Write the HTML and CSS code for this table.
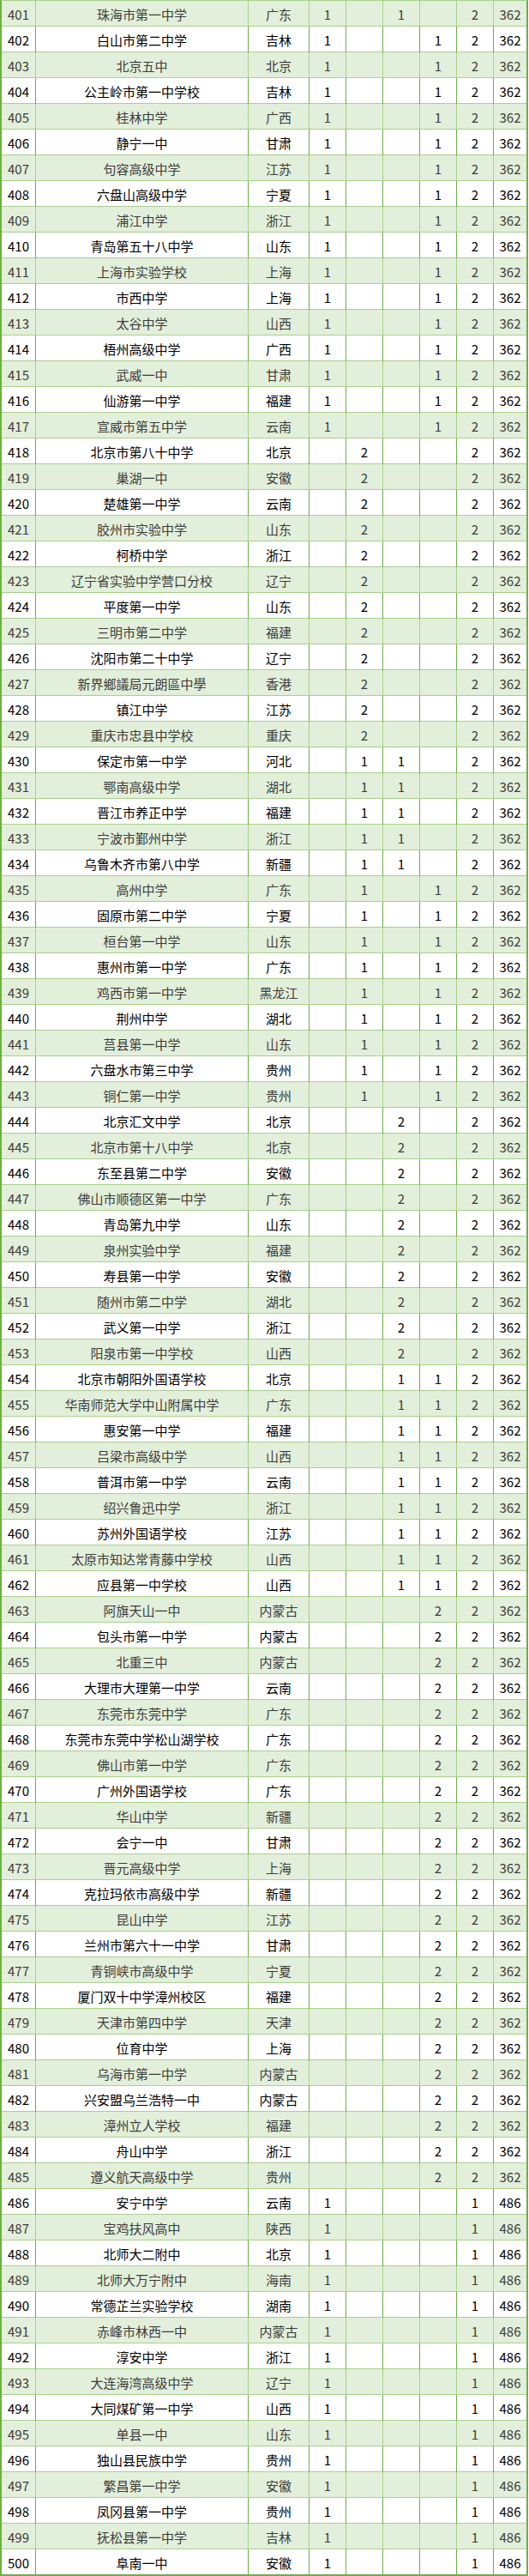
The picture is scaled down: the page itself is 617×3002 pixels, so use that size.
FILE: index.html
```html
<!DOCTYPE html>
<html lang="zh-CN">
<head>
<meta charset="utf-8">
<title>排名 401-500</title>
<link rel="stylesheet" href="styles.css">
</head>
<body>
<div class="sheet">
<div class="row alt"><span class="c">401</span><span class="c">珠海市第一中学</span><span class="c">广东</span><span class="c">1</span><span class="c"></span><span class="c">1</span><span class="c"></span><span class="c">2</span><span class="c">362</span></div>
<div class="row"><span class="c">402</span><span class="c">白山市第二中学</span><span class="c">吉林</span><span class="c">1</span><span class="c"></span><span class="c"></span><span class="c">1</span><span class="c">2</span><span class="c">362</span></div>
<div class="row alt"><span class="c">403</span><span class="c">北京五中</span><span class="c">北京</span><span class="c">1</span><span class="c"></span><span class="c"></span><span class="c">1</span><span class="c">2</span><span class="c">362</span></div>
<div class="row"><span class="c">404</span><span class="c">公主岭市第一中学校</span><span class="c">吉林</span><span class="c">1</span><span class="c"></span><span class="c"></span><span class="c">1</span><span class="c">2</span><span class="c">362</span></div>
<div class="row alt"><span class="c">405</span><span class="c">桂林中学</span><span class="c">广西</span><span class="c">1</span><span class="c"></span><span class="c"></span><span class="c">1</span><span class="c">2</span><span class="c">362</span></div>
<div class="row"><span class="c">406</span><span class="c">静宁一中</span><span class="c">甘肃</span><span class="c">1</span><span class="c"></span><span class="c"></span><span class="c">1</span><span class="c">2</span><span class="c">362</span></div>
<div class="row alt"><span class="c">407</span><span class="c">句容高级中学</span><span class="c">江苏</span><span class="c">1</span><span class="c"></span><span class="c"></span><span class="c">1</span><span class="c">2</span><span class="c">362</span></div>
<div class="row"><span class="c">408</span><span class="c">六盘山高级中学</span><span class="c">宁夏</span><span class="c">1</span><span class="c"></span><span class="c"></span><span class="c">1</span><span class="c">2</span><span class="c">362</span></div>
<div class="row alt"><span class="c">409</span><span class="c">浦江中学</span><span class="c">浙江</span><span class="c">1</span><span class="c"></span><span class="c"></span><span class="c">1</span><span class="c">2</span><span class="c">362</span></div>
<div class="row"><span class="c">410</span><span class="c">青岛第五十八中学</span><span class="c">山东</span><span class="c">1</span><span class="c"></span><span class="c"></span><span class="c">1</span><span class="c">2</span><span class="c">362</span></div>
<div class="row alt"><span class="c">411</span><span class="c">上海市实验学校</span><span class="c">上海</span><span class="c">1</span><span class="c"></span><span class="c"></span><span class="c">1</span><span class="c">2</span><span class="c">362</span></div>
<div class="row"><span class="c">412</span><span class="c">市西中学</span><span class="c">上海</span><span class="c">1</span><span class="c"></span><span class="c"></span><span class="c">1</span><span class="c">2</span><span class="c">362</span></div>
<div class="row alt"><span class="c">413</span><span class="c">太谷中学</span><span class="c">山西</span><span class="c">1</span><span class="c"></span><span class="c"></span><span class="c">1</span><span class="c">2</span><span class="c">362</span></div>
<div class="row"><span class="c">414</span><span class="c">梧州高级中学</span><span class="c">广西</span><span class="c">1</span><span class="c"></span><span class="c"></span><span class="c">1</span><span class="c">2</span><span class="c">362</span></div>
<div class="row alt"><span class="c">415</span><span class="c">武威一中</span><span class="c">甘肃</span><span class="c">1</span><span class="c"></span><span class="c"></span><span class="c">1</span><span class="c">2</span><span class="c">362</span></div>
<div class="row"><span class="c">416</span><span class="c">仙游第一中学</span><span class="c">福建</span><span class="c">1</span><span class="c"></span><span class="c"></span><span class="c">1</span><span class="c">2</span><span class="c">362</span></div>
<div class="row alt"><span class="c">417</span><span class="c">宣威市第五中学</span><span class="c">云南</span><span class="c">1</span><span class="c"></span><span class="c"></span><span class="c">1</span><span class="c">2</span><span class="c">362</span></div>
<div class="row"><span class="c">418</span><span class="c">北京市第八十中学</span><span class="c">北京</span><span class="c"></span><span class="c">2</span><span class="c"></span><span class="c"></span><span class="c">2</span><span class="c">362</span></div>
<div class="row alt"><span class="c">419</span><span class="c">巢湖一中</span><span class="c">安徽</span><span class="c"></span><span class="c">2</span><span class="c"></span><span class="c"></span><span class="c">2</span><span class="c">362</span></div>
<div class="row"><span class="c">420</span><span class="c">楚雄第一中学</span><span class="c">云南</span><span class="c"></span><span class="c">2</span><span class="c"></span><span class="c"></span><span class="c">2</span><span class="c">362</span></div>
<div class="row alt"><span class="c">421</span><span class="c">胶州市实验中学</span><span class="c">山东</span><span class="c"></span><span class="c">2</span><span class="c"></span><span class="c"></span><span class="c">2</span><span class="c">362</span></div>
<div class="row"><span class="c">422</span><span class="c">柯桥中学</span><span class="c">浙江</span><span class="c"></span><span class="c">2</span><span class="c"></span><span class="c"></span><span class="c">2</span><span class="c">362</span></div>
<div class="row alt"><span class="c">423</span><span class="c">辽宁省实验中学营口分校</span><span class="c">辽宁</span><span class="c"></span><span class="c">2</span><span class="c"></span><span class="c"></span><span class="c">2</span><span class="c">362</span></div>
<div class="row"><span class="c">424</span><span class="c">平度第一中学</span><span class="c">山东</span><span class="c"></span><span class="c">2</span><span class="c"></span><span class="c"></span><span class="c">2</span><span class="c">362</span></div>
<div class="row alt"><span class="c">425</span><span class="c">三明市第二中学</span><span class="c">福建</span><span class="c"></span><span class="c">2</span><span class="c"></span><span class="c"></span><span class="c">2</span><span class="c">362</span></div>
<div class="row"><span class="c">426</span><span class="c">沈阳市第二十中学</span><span class="c">辽宁</span><span class="c"></span><span class="c">2</span><span class="c"></span><span class="c"></span><span class="c">2</span><span class="c">362</span></div>
<div class="row alt"><span class="c">427</span><span class="c">新界鄉議局元朗區中學</span><span class="c">香港</span><span class="c"></span><span class="c">2</span><span class="c"></span><span class="c"></span><span class="c">2</span><span class="c">362</span></div>
<div class="row"><span class="c">428</span><span class="c">镇江中学</span><span class="c">江苏</span><span class="c"></span><span class="c">2</span><span class="c"></span><span class="c"></span><span class="c">2</span><span class="c">362</span></div>
<div class="row alt"><span class="c">429</span><span class="c">重庆市忠县中学校</span><span class="c">重庆</span><span class="c"></span><span class="c">2</span><span class="c"></span><span class="c"></span><span class="c">2</span><span class="c">362</span></div>
<div class="row"><span class="c">430</span><span class="c">保定市第一中学</span><span class="c">河北</span><span class="c"></span><span class="c">1</span><span class="c">1</span><span class="c"></span><span class="c">2</span><span class="c">362</span></div>
<div class="row alt"><span class="c">431</span><span class="c">鄂南高级中学</span><span class="c">湖北</span><span class="c"></span><span class="c">1</span><span class="c">1</span><span class="c"></span><span class="c">2</span><span class="c">362</span></div>
<div class="row"><span class="c">432</span><span class="c">晋江市养正中学</span><span class="c">福建</span><span class="c"></span><span class="c">1</span><span class="c">1</span><span class="c"></span><span class="c">2</span><span class="c">362</span></div>
<div class="row alt"><span class="c">433</span><span class="c">宁波市鄞州中学</span><span class="c">浙江</span><span class="c"></span><span class="c">1</span><span class="c">1</span><span class="c"></span><span class="c">2</span><span class="c">362</span></div>
<div class="row"><span class="c">434</span><span class="c">乌鲁木齐市第八中学</span><span class="c">新疆</span><span class="c"></span><span class="c">1</span><span class="c">1</span><span class="c"></span><span class="c">2</span><span class="c">362</span></div>
<div class="row alt"><span class="c">435</span><span class="c">高州中学</span><span class="c">广东</span><span class="c"></span><span class="c">1</span><span class="c"></span><span class="c">1</span><span class="c">2</span><span class="c">362</span></div>
<div class="row"><span class="c">436</span><span class="c">固原市第二中学</span><span class="c">宁夏</span><span class="c"></span><span class="c">1</span><span class="c"></span><span class="c">1</span><span class="c">2</span><span class="c">362</span></div>
<div class="row alt"><span class="c">437</span><span class="c">桓台第一中学</span><span class="c">山东</span><span class="c"></span><span class="c">1</span><span class="c"></span><span class="c">1</span><span class="c">2</span><span class="c">362</span></div>
<div class="row"><span class="c">438</span><span class="c">惠州市第一中学</span><span class="c">广东</span><span class="c"></span><span class="c">1</span><span class="c"></span><span class="c">1</span><span class="c">2</span><span class="c">362</span></div>
<div class="row alt"><span class="c">439</span><span class="c">鸡西市第一中学</span><span class="c">黑龙江</span><span class="c"></span><span class="c">1</span><span class="c"></span><span class="c">1</span><span class="c">2</span><span class="c">362</span></div>
<div class="row"><span class="c">440</span><span class="c">荆州中学</span><span class="c">湖北</span><span class="c"></span><span class="c">1</span><span class="c"></span><span class="c">1</span><span class="c">2</span><span class="c">362</span></div>
<div class="row alt"><span class="c">441</span><span class="c">莒县第一中学</span><span class="c">山东</span><span class="c"></span><span class="c">1</span><span class="c"></span><span class="c">1</span><span class="c">2</span><span class="c">362</span></div>
<div class="row"><span class="c">442</span><span class="c">六盘水市第三中学</span><span class="c">贵州</span><span class="c"></span><span class="c">1</span><span class="c"></span><span class="c">1</span><span class="c">2</span><span class="c">362</span></div>
<div class="row alt"><span class="c">443</span><span class="c">铜仁第一中学</span><span class="c">贵州</span><span class="c"></span><span class="c">1</span><span class="c"></span><span class="c">1</span><span class="c">2</span><span class="c">362</span></div>
<div class="row"><span class="c">444</span><span class="c">北京汇文中学</span><span class="c">北京</span><span class="c"></span><span class="c"></span><span class="c">2</span><span class="c"></span><span class="c">2</span><span class="c">362</span></div>
<div class="row alt"><span class="c">445</span><span class="c">北京市第十八中学</span><span class="c">北京</span><span class="c"></span><span class="c"></span><span class="c">2</span><span class="c"></span><span class="c">2</span><span class="c">362</span></div>
<div class="row"><span class="c">446</span><span class="c">东至县第二中学</span><span class="c">安徽</span><span class="c"></span><span class="c"></span><span class="c">2</span><span class="c"></span><span class="c">2</span><span class="c">362</span></div>
<div class="row alt"><span class="c">447</span><span class="c">佛山市顺德区第一中学</span><span class="c">广东</span><span class="c"></span><span class="c"></span><span class="c">2</span><span class="c"></span><span class="c">2</span><span class="c">362</span></div>
<div class="row"><span class="c">448</span><span class="c">青岛第九中学</span><span class="c">山东</span><span class="c"></span><span class="c"></span><span class="c">2</span><span class="c"></span><span class="c">2</span><span class="c">362</span></div>
<div class="row alt"><span class="c">449</span><span class="c">泉州实验中学</span><span class="c">福建</span><span class="c"></span><span class="c"></span><span class="c">2</span><span class="c"></span><span class="c">2</span><span class="c">362</span></div>
<div class="row"><span class="c">450</span><span class="c">寿县第一中学</span><span class="c">安徽</span><span class="c"></span><span class="c"></span><span class="c">2</span><span class="c"></span><span class="c">2</span><span class="c">362</span></div>
<div class="row alt"><span class="c">451</span><span class="c">随州市第二中学</span><span class="c">湖北</span><span class="c"></span><span class="c"></span><span class="c">2</span><span class="c"></span><span class="c">2</span><span class="c">362</span></div>
<div class="row"><span class="c">452</span><span class="c">武义第一中学</span><span class="c">浙江</span><span class="c"></span><span class="c"></span><span class="c">2</span><span class="c"></span><span class="c">2</span><span class="c">362</span></div>
<div class="row alt"><span class="c">453</span><span class="c">阳泉市第一中学校</span><span class="c">山西</span><span class="c"></span><span class="c"></span><span class="c">2</span><span class="c"></span><span class="c">2</span><span class="c">362</span></div>
<div class="row"><span class="c">454</span><span class="c">北京市朝阳外国语学校</span><span class="c">北京</span><span class="c"></span><span class="c"></span><span class="c">1</span><span class="c">1</span><span class="c">2</span><span class="c">362</span></div>
<div class="row alt"><span class="c">455</span><span class="c">华南师范大学中山附属中学</span><span class="c">广东</span><span class="c"></span><span class="c"></span><span class="c">1</span><span class="c">1</span><span class="c">2</span><span class="c">362</span></div>
<div class="row"><span class="c">456</span><span class="c">惠安第一中学</span><span class="c">福建</span><span class="c"></span><span class="c"></span><span class="c">1</span><span class="c">1</span><span class="c">2</span><span class="c">362</span></div>
<div class="row alt"><span class="c">457</span><span class="c">吕梁市高级中学</span><span class="c">山西</span><span class="c"></span><span class="c"></span><span class="c">1</span><span class="c">1</span><span class="c">2</span><span class="c">362</span></div>
<div class="row"><span class="c">458</span><span class="c">普洱市第一中学</span><span class="c">云南</span><span class="c"></span><span class="c"></span><span class="c">1</span><span class="c">1</span><span class="c">2</span><span class="c">362</span></div>
<div class="row alt"><span class="c">459</span><span class="c">绍兴鲁迅中学</span><span class="c">浙江</span><span class="c"></span><span class="c"></span><span class="c">1</span><span class="c">1</span><span class="c">2</span><span class="c">362</span></div>
<div class="row"><span class="c">460</span><span class="c">苏州外国语学校</span><span class="c">江苏</span><span class="c"></span><span class="c"></span><span class="c">1</span><span class="c">1</span><span class="c">2</span><span class="c">362</span></div>
<div class="row alt"><span class="c">461</span><span class="c">太原市知达常青藤中学校</span><span class="c">山西</span><span class="c"></span><span class="c"></span><span class="c">1</span><span class="c">1</span><span class="c">2</span><span class="c">362</span></div>
<div class="row"><span class="c">462</span><span class="c">应县第一中学校</span><span class="c">山西</span><span class="c"></span><span class="c"></span><span class="c">1</span><span class="c">1</span><span class="c">2</span><span class="c">362</span></div>
<div class="row alt"><span class="c">463</span><span class="c">阿旗天山一中</span><span class="c">内蒙古</span><span class="c"></span><span class="c"></span><span class="c"></span><span class="c">2</span><span class="c">2</span><span class="c">362</span></div>
<div class="row"><span class="c">464</span><span class="c">包头市第一中学</span><span class="c">内蒙古</span><span class="c"></span><span class="c"></span><span class="c"></span><span class="c">2</span><span class="c">2</span><span class="c">362</span></div>
<div class="row alt"><span class="c">465</span><span class="c">北重三中</span><span class="c">内蒙古</span><span class="c"></span><span class="c"></span><span class="c"></span><span class="c">2</span><span class="c">2</span><span class="c">362</span></div>
<div class="row"><span class="c">466</span><span class="c">大理市大理第一中学</span><span class="c">云南</span><span class="c"></span><span class="c"></span><span class="c"></span><span class="c">2</span><span class="c">2</span><span class="c">362</span></div>
<div class="row alt"><span class="c">467</span><span class="c">东莞市东莞中学</span><span class="c">广东</span><span class="c"></span><span class="c"></span><span class="c"></span><span class="c">2</span><span class="c">2</span><span class="c">362</span></div>
<div class="row"><span class="c">468</span><span class="c">东莞市东莞中学松山湖学校</span><span class="c">广东</span><span class="c"></span><span class="c"></span><span class="c"></span><span class="c">2</span><span class="c">2</span><span class="c">362</span></div>
<div class="row alt"><span class="c">469</span><span class="c">佛山市第一中学</span><span class="c">广东</span><span class="c"></span><span class="c"></span><span class="c"></span><span class="c">2</span><span class="c">2</span><span class="c">362</span></div>
<div class="row"><span class="c">470</span><span class="c">广州外国语学校</span><span class="c">广东</span><span class="c"></span><span class="c"></span><span class="c"></span><span class="c">2</span><span class="c">2</span><span class="c">362</span></div>
<div class="row alt"><span class="c">471</span><span class="c">华山中学</span><span class="c">新疆</span><span class="c"></span><span class="c"></span><span class="c"></span><span class="c">2</span><span class="c">2</span><span class="c">362</span></div>
<div class="row"><span class="c">472</span><span class="c">会宁一中</span><span class="c">甘肃</span><span class="c"></span><span class="c"></span><span class="c"></span><span class="c">2</span><span class="c">2</span><span class="c">362</span></div>
<div class="row alt"><span class="c">473</span><span class="c">晋元高级中学</span><span class="c">上海</span><span class="c"></span><span class="c"></span><span class="c"></span><span class="c">2</span><span class="c">2</span><span class="c">362</span></div>
<div class="row"><span class="c">474</span><span class="c">克拉玛依市高级中学</span><span class="c">新疆</span><span class="c"></span><span class="c"></span><span class="c"></span><span class="c">2</span><span class="c">2</span><span class="c">362</span></div>
<div class="row alt"><span class="c">475</span><span class="c">昆山中学</span><span class="c">江苏</span><span class="c"></span><span class="c"></span><span class="c"></span><span class="c">2</span><span class="c">2</span><span class="c">362</span></div>
<div class="row"><span class="c">476</span><span class="c">兰州市第六十一中学</span><span class="c">甘肃</span><span class="c"></span><span class="c"></span><span class="c"></span><span class="c">2</span><span class="c">2</span><span class="c">362</span></div>
<div class="row alt"><span class="c">477</span><span class="c">青铜峡市高级中学</span><span class="c">宁夏</span><span class="c"></span><span class="c"></span><span class="c"></span><span class="c">2</span><span class="c">2</span><span class="c">362</span></div>
<div class="row"><span class="c">478</span><span class="c">厦门双十中学漳州校区</span><span class="c">福建</span><span class="c"></span><span class="c"></span><span class="c"></span><span class="c">2</span><span class="c">2</span><span class="c">362</span></div>
<div class="row alt"><span class="c">479</span><span class="c">天津市第四中学</span><span class="c">天津</span><span class="c"></span><span class="c"></span><span class="c"></span><span class="c">2</span><span class="c">2</span><span class="c">362</span></div>
<div class="row"><span class="c">480</span><span class="c">位育中学</span><span class="c">上海</span><span class="c"></span><span class="c"></span><span class="c"></span><span class="c">2</span><span class="c">2</span><span class="c">362</span></div>
<div class="row alt"><span class="c">481</span><span class="c">乌海市第一中学</span><span class="c">内蒙古</span><span class="c"></span><span class="c"></span><span class="c"></span><span class="c">2</span><span class="c">2</span><span class="c">362</span></div>
<div class="row"><span class="c">482</span><span class="c">兴安盟乌兰浩特一中</span><span class="c">内蒙古</span><span class="c"></span><span class="c"></span><span class="c"></span><span class="c">2</span><span class="c">2</span><span class="c">362</span></div>
<div class="row alt"><span class="c">483</span><span class="c">漳州立人学校</span><span class="c">福建</span><span class="c"></span><span class="c"></span><span class="c"></span><span class="c">2</span><span class="c">2</span><span class="c">362</span></div>
<div class="row"><span class="c">484</span><span class="c">舟山中学</span><span class="c">浙江</span><span class="c"></span><span class="c"></span><span class="c"></span><span class="c">2</span><span class="c">2</span><span class="c">362</span></div>
<div class="row alt"><span class="c">485</span><span class="c">遵义航天高级中学</span><span class="c">贵州</span><span class="c"></span><span class="c"></span><span class="c"></span><span class="c">2</span><span class="c">2</span><span class="c">362</span></div>
<div class="row"><span class="c">486</span><span class="c">安宁中学</span><span class="c">云南</span><span class="c">1</span><span class="c"></span><span class="c"></span><span class="c"></span><span class="c">1</span><span class="c">486</span></div>
<div class="row alt"><span class="c">487</span><span class="c">宝鸡扶风高中</span><span class="c">陕西</span><span class="c">1</span><span class="c"></span><span class="c"></span><span class="c"></span><span class="c">1</span><span class="c">486</span></div>
<div class="row"><span class="c">488</span><span class="c">北师大二附中</span><span class="c">北京</span><span class="c">1</span><span class="c"></span><span class="c"></span><span class="c"></span><span class="c">1</span><span class="c">486</span></div>
<div class="row alt"><span class="c">489</span><span class="c">北师大万宁附中</span><span class="c">海南</span><span class="c">1</span><span class="c"></span><span class="c"></span><span class="c"></span><span class="c">1</span><span class="c">486</span></div>
<div class="row"><span class="c">490</span><span class="c">常德芷兰实验学校</span><span class="c">湖南</span><span class="c">1</span><span class="c"></span><span class="c"></span><span class="c"></span><span class="c">1</span><span class="c">486</span></div>
<div class="row alt"><span class="c">491</span><span class="c">赤峰市林西一中</span><span class="c">内蒙古</span><span class="c">1</span><span class="c"></span><span class="c"></span><span class="c"></span><span class="c">1</span><span class="c">486</span></div>
<div class="row"><span class="c">492</span><span class="c">淳安中学</span><span class="c">浙江</span><span class="c">1</span><span class="c"></span><span class="c"></span><span class="c"></span><span class="c">1</span><span class="c">486</span></div>
<div class="row alt"><span class="c">493</span><span class="c">大连海湾高级中学</span><span class="c">辽宁</span><span class="c">1</span><span class="c"></span><span class="c"></span><span class="c"></span><span class="c">1</span><span class="c">486</span></div>
<div class="row"><span class="c">494</span><span class="c">大同煤矿第一中学</span><span class="c">山西</span><span class="c">1</span><span class="c"></span><span class="c"></span><span class="c"></span><span class="c">1</span><span class="c">486</span></div>
<div class="row alt"><span class="c">495</span><span class="c">单县一中</span><span class="c">山东</span><span class="c">1</span><span class="c"></span><span class="c"></span><span class="c"></span><span class="c">1</span><span class="c">486</span></div>
<div class="row"><span class="c">496</span><span class="c">独山县民族中学</span><span class="c">贵州</span><span class="c">1</span><span class="c"></span><span class="c"></span><span class="c"></span><span class="c">1</span><span class="c">486</span></div>
<div class="row alt"><span class="c">497</span><span class="c">繁昌第一中学</span><span class="c">安徽</span><span class="c">1</span><span class="c"></span><span class="c"></span><span class="c"></span><span class="c">1</span><span class="c">486</span></div>
<div class="row"><span class="c">498</span><span class="c">凤冈县第一中学</span><span class="c">贵州</span><span class="c">1</span><span class="c"></span><span class="c"></span><span class="c"></span><span class="c">1</span><span class="c">486</span></div>
<div class="row alt"><span class="c">499</span><span class="c">抚松县第一中学</span><span class="c">吉林</span><span class="c">1</span><span class="c"></span><span class="c"></span><span class="c"></span><span class="c">1</span><span class="c">486</span></div>
<div class="row"><span class="c">500</span><span class="c">阜南一中</span><span class="c">安徽</span><span class="c">1</span><span class="c"></span><span class="c"></span><span class="c"></span><span class="c">1</span><span class="c">486</span></div>
</div>
</body>
</html>
```

FILE: styles.css
```css
html, body {
  margin: 0;
  padding: 0;
  background: #ffffff;
}

.sheet {
  box-sizing: border-box;
  width: 616px;
  border-left: 2px solid #70ad47;
  border-right: 2px solid #70ad47;
  border-top: 1px solid #a9d08e;
  border-bottom: 2px solid #70ad47;
  font-family: "Noto Sans CJK SC", "Noto Sans", sans-serif;
  font-size: 15px;
}

.row {
  display: grid;
  grid-template-columns: 40px 248px 71px 43px 43px 43px 43px 43px 38px;
  box-sizing: border-box;
  height: 30px;
  border-bottom: 1px solid #a9d08e;
  background: #ffffff;
  color: #000000;
}

.row:last-child {
  border-bottom: none;
  height: 29px;
}

.row.alt {
  background: #e2efda;
  color: #3c3c3c;
}

.c {
  box-sizing: border-box;
  display: flex;
  align-items: center;
  justify-content: center;
  white-space: nowrap;
  line-height: 29px;
  padding-top: 1px;
  border-right: 1px solid #70ad47;
}

.row.alt .c {
  border-right-color: #a9d08e;
}

.c:last-child {
  border-right: none;
}
```
